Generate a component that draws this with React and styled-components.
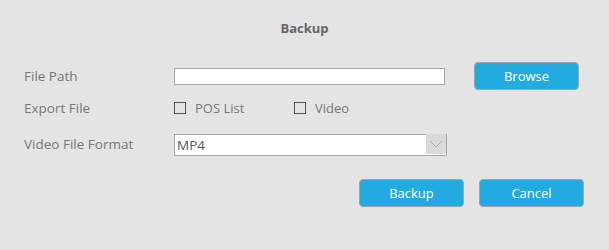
import React, { useState } from 'react'
import styled, { createGlobalStyle } from 'styled-components'

const GlobalStyle = createGlobalStyle`
  body {
    margin: 0;
    background: #e4e4e4;
    font-family: "Open Sans", "Noto Sans", Arial, sans-serif;
  }
`

const App = () => {
  const [path, setPath] = useState('')
  const [posList, setPosList] = useState(false)
  const [video, setVideo] = useState(false)
  const [format, setFormat] = useState('MP4')

  return (
    <Dialog>
      <GlobalStyle />
      <Title>Backup</Title>
      <Row>
        <Label>File Path</Label>
        <PathInput value={path} onChange={(e) => setPath(e.target.value)} />
        <Button>Browse</Button>
      </Row>
      <CheckRow>
        <Label>Export File</Label>
        <CheckGroup>
          <CheckItem>
            <Box type="checkbox" checked={posList} onChange={() => setPosList(!posList)} />
            POS List
          </CheckItem>
          <CheckItem>
            <Box type="checkbox" checked={video} onChange={() => setVideo(!video)} />
            Video
          </CheckItem>
        </CheckGroup>
      </CheckRow>
      <SelectRow>
        <Label>Video File Format</Label>
        <SelectWrap>
          <Select value={format} onChange={(e) => setFormat(e.target.value)}>
            <option>MP4</option>
            <option>AVI</option>
          </Select>
          <Arrow>
            <svg width="14" height="8" viewBox="0 0 14 8">
              <polyline points="1,1 7,7 13,1" fill="none" stroke="#a8a8a8" strokeWidth="1" />
            </svg>
          </Arrow>
        </SelectWrap>
      </SelectRow>
      <Footer>
        <Button>Backup</Button>
        <Button>Cancel</Button>
      </Footer>
    </Dialog>
  )
}

const Dialog = styled.div`
  width: 609px;
  height: 250px;
  box-sizing: border-box;
  padding-top: 18px;
  background: #e4e4e4;
`

const Title = styled.div`
  height: 20px;
  line-height: 20px;
  text-align: center;
  font-size: 13px;
  font-weight: bold;
  color: #666;
`

const Row = styled.div`
  display: grid;
  grid-template-columns: 150px 271px 105px;
  align-items: center;
  padding-left: 24px;
  margin-top: 24px;
  height: 28px;

  & > button {
    margin-left: 29px;
  }
`

const Label = styled.span`
  font-size: 13.5px;
  color: #777;
`

const PathInput = styled.input`
  box-sizing: border-box;
  width: 271px;
  height: 17px;
  margin: 0;
  margin-top: 1px;
  border: 1px solid #a9a9a9;
  background: #fff;
  outline: none;
  font-family: inherit;
  font-size: 12px;
`

const Button = styled.button`
  box-sizing: border-box;
  width: 105px;
  height: 28px;
  border: 1px solid #a4a4a4;
  border-radius: 4px;
  background: #22abe0;
  color: #fff;
  font-family: inherit;
  font-size: 13px;
  padding: 0;
  cursor: pointer;
`

const CheckRow = styled.div`
  display: grid;
  grid-template-columns: 150px auto;
  align-items: center;
  padding-left: 24px;
  margin-top: 8px;
  height: 20px;
`

const CheckGroup = styled.div`
  display: flex;
  align-items: center;
`

const CheckItem = styled.label`
  display: flex;
  align-items: center;
  gap: 9px;
  width: 120px;
  font-size: 13px;
  color: #777;
`

const Box = styled.input`
  appearance: none;
  box-sizing: border-box;
  width: 12px;
  height: 12px;
  margin: 0;
  border: 1px solid #555;
  background: transparent;

  &:checked {
    background: #22abe0;
  }
`

const SelectRow = styled.div`
  display: grid;
  grid-template-columns: 150px auto;
  align-items: center;
  padding-left: 24px;
  margin-top: 15px;
  height: 22px;
`

const SelectWrap = styled.div`
  position: relative;
  width: 273px;
  height: 22px;
`

const Select = styled.select`
  appearance: none;
  box-sizing: border-box;
  width: 100%;
  height: 22px;
  margin: 0;
  padding: 0 0 0 2px;
  border: 1px solid #a9a9a9;
  border-radius: 0;
  background: #fff;
  color: #555;
  font-family: inherit;
  font-size: 13.5px;
  outline: none;
`

const Arrow = styled.span`
  position: absolute;
  top: 1px;
  right: 1px;
  bottom: 1px;
  width: 20px;
  display: flex;
  align-items: center;
  justify-content: center;
  background: #d9d9d9;
  pointer-events: none;
`

const Footer = styled.div`
  display: flex;
  justify-content: flex-end;
  gap: 15px;
  padding-right: 25px;
  margin-top: 24px;
`

export default App
